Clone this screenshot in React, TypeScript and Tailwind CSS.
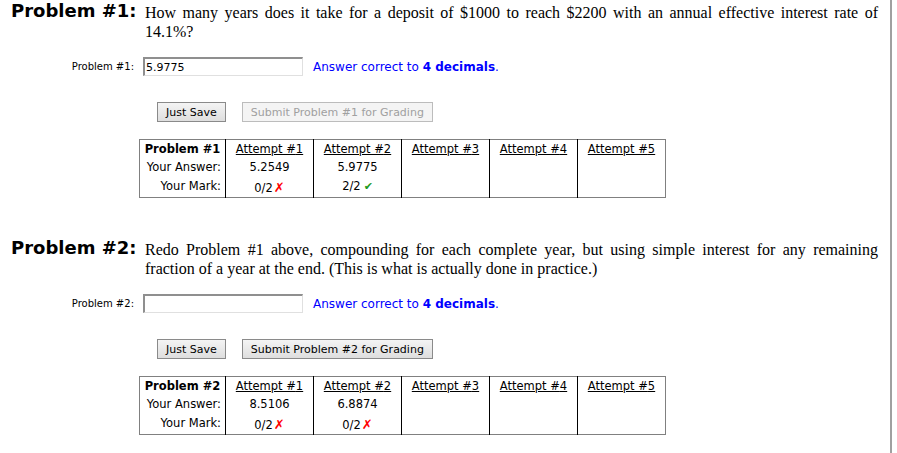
import React from "react";

type Attempt = { answer: string; mark: string; correct: boolean };

type Problem = {
  num: number;
  question: string;
  value: string;
  canSubmit: boolean;
  attempts: Attempt[];
};

const problems: Problem[] = [
  {
    num: 1,
    question:
      "How many years does it take for a deposit of $1000 to reach $2200 with an annual effective interest rate of 14.1%?",
    value: "5.9775",
    canSubmit: false,
    attempts: [
      { answer: "5.2549", mark: "0/2", correct: false },
      { answer: "5.9775", mark: "2/2", correct: true },
    ],
  },
  {
    num: 2,
    question:
      "Redo Problem #1 above, compounding for each complete year, but using simple interest for any remaining fraction of a year at the end. (This is what is actually done in practice.)",
    value: "",
    canSubmit: true,
    attempts: [
      { answer: "8.5106", mark: "0/2", correct: false },
      { answer: "6.8874", mark: "0/2", correct: false },
    ],
  },
];

const sans = "font-['DejaVu_Sans','Verdana',sans-serif]";
const serif = "font-['Liberation_Serif','Times_New_Roman',serif]";

const btn =
  "h-[20px] px-[8px] text-[11px] leading-none text-black bg-gradient-to-b from-[#f4f4f4] to-[#dedede] border border-[#8a8a8a]";
const btnOff =
  "h-[20px] px-[8px] text-[11px] leading-none text-[#a0a0a0] bg-[#f4f4f4] border border-[#bcbcbc]";

function MarkIcon({ correct }: { correct: boolean }) {
  return correct ? (
    <span className="text-[#1e9a1e] text-[11px] ml-[3px]">✔</span>
  ) : (
    <span className="text-[#ff0000] text-[13px] ml-[1px]">✗</span>
  );
}

function AttemptsTable({ p }: { p: Problem }) {
  const cols = [0, 1, 2, 3, 4];
  return (
    <table
      className={`${sans} text-[11.5px] text-black border border-[#808080] border-collapse ml-[139px] mt-[17px]`}
    >
      <tbody>
        <tr className="h-[19px]">
          <td className="w-[86px] text-center font-bold align-top pt-[1px]">
            Problem #{p.num}
          </td>
          {cols.map((i) => (
            <td
              key={i}
              className="w-[88px] text-center border-l border-black align-top pt-[1px]"
            >
              <span className="underline">Attempt #{i + 1}</span>
            </td>
          ))}
        </tr>
        <tr className="h-[19px]">
          <td className="text-right pr-[4px]">Your Answer:</td>
          {cols.map((i) => (
            <td key={i} className="text-center border-l border-black">
              {p.attempts[i]?.answer ?? ""}
            </td>
          ))}
        </tr>
        <tr className="h-[19px]">
          <td className="text-right pr-[4px] align-top">Your Mark:</td>
          {cols.map((i) => (
            <td key={i} className="text-center border-l border-black align-top">
              {p.attempts[i] ? (
                <>
                  {p.attempts[i].mark}
                  <MarkIcon correct={p.attempts[i].correct} />
                </>
              ) : null}
            </td>
          ))}
        </tr>
      </tbody>
    </table>
  );
}

function ProblemBlock({ p }: { p: Problem }) {
  return (
    <section className="h-[237px]">
      <div className="flex items-start">
        <h2
          className={`${sans} w-[145px] shrink-0 pl-[11px] whitespace-nowrap text-[18px] leading-[22px] font-bold text-black`}
        >
          Problem #{p.num}:
        </h2>
        <p
          className={`${serif} w-[733px] text-[16px] leading-[19px] text-justify text-black pt-[3px]`}
        >
          {p.question}
        </p>
      </div>

      <div className={`${sans} flex items-center mt-[16px]`}>
        <label className="w-[138px] text-right pr-[4px] text-[10px] text-black">
          Problem #{p.num}:
        </label>
        <input
          readOnly
          value={p.value}
          className={`${sans} ml-[5px] w-[160px] h-[19px] text-[11px] pl-[1px] text-black bg-white border border-t-2 border-l-2 border-t-[#8f8f8f] border-l-[#8f8f8f] border-b-[#e0e0e0] border-r-[#e0e0e0] outline-none`}
        />
        <span className="ml-[10px] text-[12px] text-[#0000ff]">
          Answer correct to <b>4 decimals</b>.
        </span>
      </div>

      <div className={`${sans} flex gap-[16px] ml-[157px] mt-[26px]`}>
        <button className={btn}>Just Save</button>
        <button disabled={!p.canSubmit} className={p.canSubmit ? btn : btnOff}>
          Submit Problem #{p.num} for Grading
        </button>
      </div>

      <AttemptsTable p={p} />
    </section>
  );
}

export default function App() {
  return (
    <div className="w-[892px] min-h-[453px] bg-white border-r-2 border-[#a0a0a0]">
      {problems.map((p) => (
        <ProblemBlock key={p.num} p={p} />
      ))}
    </div>
  );
}
